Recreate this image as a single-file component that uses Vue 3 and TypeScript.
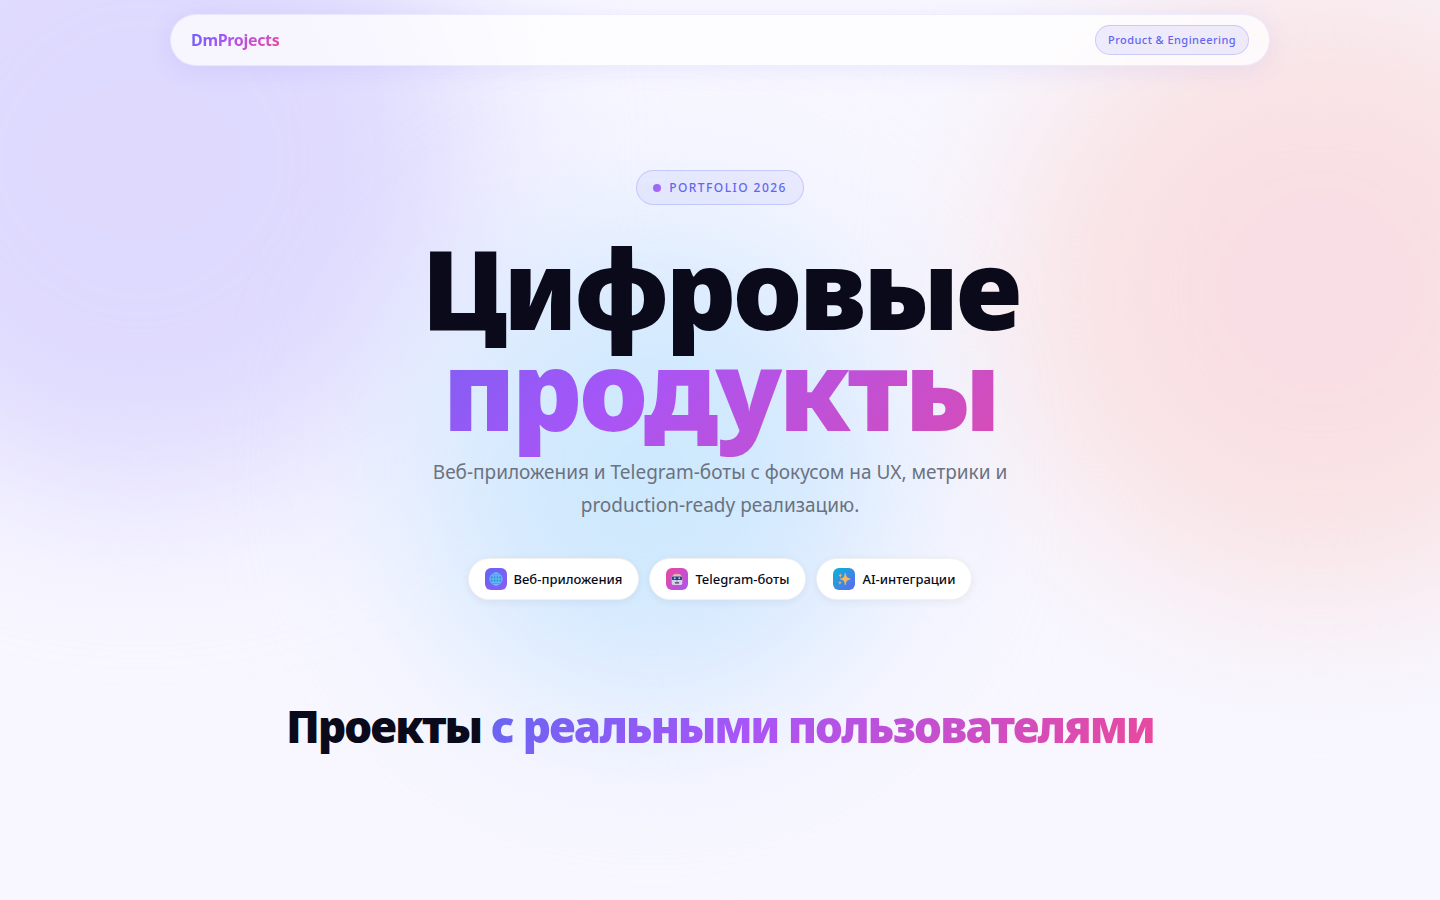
<script setup lang="ts">
type IconName = 'globe' | 'robot' | 'sparkles'

interface Skill {
  icon: IconName
  label: string
}

const skills: Skill[] = [
  { icon: 'globe', label: 'Веб-приложения' },
  { icon: 'robot', label: 'Telegram-боты' },
  { icon: 'sparkles', label: 'AI-интеграции' },
]
</script>

<template>
  <div class="page">
    <div class="backdrop" aria-hidden="true">
      <span class="orb orb-violet"></span>
      <span class="orb orb-rose"></span>
      <span class="orb orb-sky"></span>
    </div>

    <header class="nav">
      <span class="brand">DmProjects</span>
      <span class="nav-tag">Product &amp; Engineering</span>
    </header>

    <main>
      <section class="hero">
        <p class="badge"><span class="dot"></span>PORTFOLIO 2026</p>
        <h1>
          <span class="line">Цифровые</span>
          <span class="line gradient">продукты</span>
        </h1>
        <p class="lead">
          Веб-приложения и Telegram-боты с фокусом на UX, метрики и production-ready реализацию.
        </p>
        <ul class="skills">
          <li v-for="skill in skills" :key="skill.icon" class="skill">
            <span class="skill-icon" :class="skill.icon">
              <svg v-if="skill.icon === 'globe'" viewBox="0 0 16 16">
                <circle cx="8" cy="8" r="7" fill="#3a8be6" />
                <g fill="none" stroke="#72cbf7" stroke-width="0.9">
                  <circle cx="8" cy="8" r="7" />
                  <ellipse cx="8" cy="8" rx="3.4" ry="7" />
                  <path d="M8 1v14M1 8h14M2.2 4.4h11.6M2.2 11.6h11.6" />
                </g>
              </svg>
              <svg v-else-if="skill.icon === 'robot'" viewBox="0 0 16 16">
                <path d="M3 5.2C3 3.2 5 2 8 2s5 1.2 5 3.2z" fill="#e9b9b4" />
                <circle cx="8" cy="1.8" r="1" fill="#f06a6a" />
                <rect x="1" y="6" width="1.5" height="4" rx="0.7" fill="#d9689c" />
                <rect x="13.5" y="6" width="1.5" height="4" rx="0.7" fill="#d9689c" />
                <rect x="2" y="4.5" width="12" height="10.3" rx="1.6" fill="#d6d0ea" />
                <rect x="2" y="5" width="12" height="4.2" rx="1.5" fill="#34386a" />
                <circle cx="5.4" cy="7.1" r="1.2" fill="#8fd8fb" />
                <circle cx="10.6" cy="7.1" r="1.2" fill="#8fd8fb" />
                <path d="M7.3 9.8h1.4l.4 1H6.900z" fill="#9a8fc4" />
                <rect x="5.5" y="11.6" width="5" height="1.6" rx="0.5" fill="#383a5c" />
              </svg>
              <svg v-else viewBox="0 0 16 16">
                <path d="M9.5 1.5c.7 4.500 1.800 5.700 5.500 6.500-3.700.8-4.800 2-5.500 6.500-.7-4.500-1.800-5.700-5.500-6.500 3.700-.8 4.800-2 5.500-6.500z" fill="#fdb65a" stroke="#fdb65a" stroke-width="1" stroke-linejoin="round" />
                <path d="M3.800 1.200c.3 1.800.8 2.400 2.500 2.800-1.700.4-2.200 1-2.500 2.800-.3-1.800-.8-2.400-2.500-2.800 1.700-.4 2.200-1 2.500-2.800z" fill="#e9b27c" />
                <path d="M3.400 9.700c.3 1.700.8 2.200 2.300 2.500-1.500.3-2 .8-2.300 2.500-.3-1.700-.8-2.200-2.300-2.500 1.500-.3 2-.8 2.300-2.500z" fill="#e9b27c" />
              </svg>
            </span>
            {{ skill.label }}
          </li>
        </ul>
      </section>

      <section class="projects">
        <h2>Проекты <span class="gradient">с реальными пользователями</span></h2>
      </section>
    </main>
  </div>
</template>

<style>
body {
  margin: 0;
  background: #f8f7ff;
}
</style>

<style scoped>
.page {
  position: relative;
  min-height: 100vh;
  box-sizing: border-box;
  padding: 14px 24px 0;
  overflow: hidden;
  color: #0a0a1a;
  font-family: 'Noto Sans', 'Open Sans', sans-serif;
}

.backdrop {
  position: absolute;
  inset: 0;
}

.orb {
  position: absolute;
  border-radius: 50%;
  filter: blur(80px);
}

.orb-violet {
  top: -180px;
  left: -200px;
  width: 680px;
  height: 680px;
  background: radial-gradient(circle, #dfd8fe 0%, #dedafe 60%, #e0deff 100%);
}

.orb-rose {
  top: -20px;
  right: -190px;
  width: 620px;
  height: 620px;
  background: radial-gradient(circle, #f9dde7 0%, #f9e1e3 50%, #f8e5de 100%);
}

.orb-sky {
  top: 220px;
  left: calc(50% - 320px);
  width: 500px;
  height: 500px;
  background: radial-gradient(circle, #c9eafd 0%, #d3e8fe 50%, #e9eaff 100%);
}

.nav {
  position: relative;
  display: flex;
  align-items: center;
  justify-content: space-between;
  box-sizing: border-box;
  max-width: 1100px;
  min-height: 52px;
  margin: 0 auto;
  padding: 10px 20px;
  border: 1px solid rgba(99, 102, 241, 0.1);
  border-radius: 26px;
  background: rgba(255, 255, 255, 0.75);
  box-shadow: 0 4px 24px rgba(99, 102, 241, 0.1);
}

.brand,
.gradient {
  background: linear-gradient(135deg, #6366f1 0%, #a855f7 40%, #ec4899 100%);
  -webkit-background-clip: text;
  background-clip: text;
  color: transparent;
}

.brand {
  font-size: 16px;
  font-weight: 700;
  line-height: 24px;
  letter-spacing: -0.02em;
}

.nav-tag {
  padding: 6px 12px;
  border: 1px solid rgba(99, 102, 241, 0.25);
  border-radius: 20px;
  background: rgba(99, 102, 241, 0.1);
  color: #6366f1;
  font-size: 11px;
  font-weight: 500;
  line-height: 16px;
  letter-spacing: 0.04em;
}

.hero {
  position: relative;
  display: flex;
  flex-direction: column;
  align-items: center;
  padding-top: 104px;
  text-align: center;
}

.badge {
  display: flex;
  align-items: center;
  gap: 8px;
  margin: 0;
  padding: 8px 16px;
  border: 1px solid rgba(99, 102, 241, 0.25);
  border-radius: 20px;
  background: rgba(99, 102, 241, 0.08);
  color: #6366f1;
  font-size: 12px;
  font-weight: 500;
  line-height: 17px;
  letter-spacing: 0.12em;
}

.dot {
  width: 8px;
  height: 8px;
  border-radius: 50%;
  background: linear-gradient(135deg, #8b6cf5, #b565f2);
}

h1 {
  display: flex;
  flex-direction: column;
  width: 100%;
  max-width: 900px;
  margin: 32px 0 0;
  font-size: 110px;
  font-weight: 900;
  line-height: 101px;
  letter-spacing: -0.03em;
}

h1 .gradient {
  padding-bottom: 20px;
}

.lead {
  max-width: 600px;
  margin: -3px 0 0;
  color: #6b7280;
  font-size: 19px;
  line-height: 33px;
}

.skills {
  display: flex;
  flex-wrap: wrap;
  justify-content: center;
  gap: 10px;
  margin: 36px 0 0;
  padding: 0;
  list-style: none;
}

.skill {
  display: flex;
  align-items: center;
  gap: 7px;
  padding: 9px 16px;
  border: 1px solid rgba(10, 10, 26, 0.06);
  border-radius: 24px;
  background: #ffffff;
  box-shadow: 0 2px 8px rgba(10, 10, 26, 0.06);
  font-size: 13px;
  font-weight: 500;
  line-height: 22px;
}

.skill-icon {
  display: grid;
  place-items: center;
  width: 22px;
  height: 22px;
  border-radius: 6px;
}

.skill-icon svg {
  width: 14px;
  height: 14px;
}

.globe {
  background: linear-gradient(135deg, #6366f1, #8b5cf6);
}

.robot {
  background: linear-gradient(135deg, #ec4899, #a855f7);
}

.sparkles {
  background: linear-gradient(135deg, #06b6d4, #6366f1);
}

.projects {
  position: relative;
  padding: 96px 0 120px;
  text-align: center;
}

h2 {
  margin: 0;
  font-size: 44px;
  font-weight: 900;
  line-height: 60px;
  letter-spacing: -0.04em;
}
</style>
